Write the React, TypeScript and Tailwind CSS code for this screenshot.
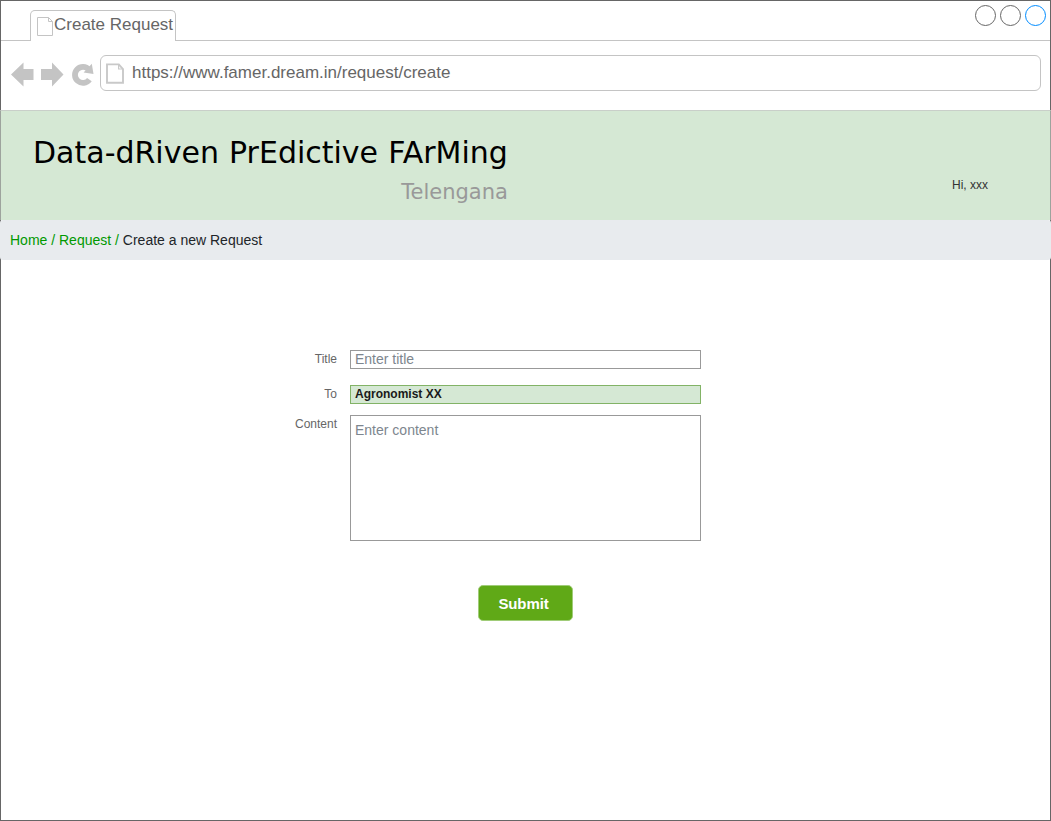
import React from "react";

function TabPageIcon() {
  return (
    <svg viewBox="0 0 17 20" className="mt-[5px] h-5 w-[17px] shrink-0" fill="none" stroke="#c4c4c4">
      <path d="M1.5 1.5H12.5L16.5 5.5V19.5H1.5Z" />
      <path d="M12.5 1.5V5.5H16.5" />
    </svg>
  );
}

function UrlPageIcon() {
  return (
    <svg viewBox="0 0 18 21" className="mt-[7px] h-[21px] w-[18px] shrink-0" fill="none" stroke="#c9c9c9" strokeWidth={1.9}>
      <path d="M1 1.4H12.8L17 6V19.8H1Z" />
      <path d="M12.6 1.4V6H17" strokeWidth={1.2} />
    </svg>
  );
}

function TabStrip() {
  return (
    <div className="flex h-10 shrink-0 items-end text-[17px] text-[#666666]">
      <div className="h-px w-[29px] bg-[#c4c4c4]" />
      <div className="flex h-[31px] w-[146px] rounded-t-[5px] border border-b-0 border-[#c4c4c4] pl-[5px]">
        <TabPageIcon />
        <span className="ml-px mt-px leading-[26px] whitespace-nowrap">Create Request</span>
      </div>
      <div className="flex h-full flex-1 justify-end gap-1 border-b border-[#c4c4c4] pr-1 pt-1">
        <div className="size-[21px] rounded-full border border-[#666666]" />
        <div className="size-[21px] rounded-full border border-[#666666]" />
        <div className="size-[21px] rounded-full border border-[#008cff]" />
      </div>
    </div>
  );
}

function AddressBar() {
  return (
    <div className="flex h-[69px] shrink-0 pl-[10px] pr-[9px] pt-[14px]">
      <svg viewBox="0 0 84 26" className="mt-[6px] h-[26px] w-[84px] shrink-0" fill="#c4c4c4">
        <path d="M0 13.5L12.5 1.5V8H22.5V19H12.5V25.5Z" />
        <path d="M52.5 13.5L41 1.5V8H30V19H41V25.5Z" />
        <path
          d="M78.4 18.6A8 8 0 1 1 78 8.6"
          fill="none"
          stroke="#c4c4c4"
          strokeWidth="5.8"
        />
        <path d="M80.8 2.8L82.5 13L72.6 11.4Z" />
      </svg>
      <div className="ml-[5px] flex h-9 flex-1 rounded-[6px] border border-[#c4c4c4] pl-[5px]">
        <UrlPageIcon />
        <span className="ml-[8px] text-[17px] leading-[33px] text-[#666666]">
          https://www.famer.dream.in/request/create
        </span>
      </div>
    </div>
  );
}

function Header() {
  return (
    <header className="-mx-px flex h-[110px] shrink-0 justify-between border-x border-x-[#9da39d] border-t border-t-[#c9cfc9] bg-[#d5e8d4] pl-8 pr-[62px]">
      <div className="flex flex-col items-end font-['DejaVu_Sans',sans-serif]">
        <h1 className="mt-[23px] text-[30px] leading-[38px] whitespace-nowrap text-black [word-spacing:0.6px]">
          Data-dRiven PrEdictive FArMing
        </h1>
        <p className="mt-[5px] text-[21px] leading-[30px] text-[#999999]">Telengana</p>
      </div>
      <span className="mt-[66px] text-[12px] leading-4 text-[#333333]">Hi, xxx</span>
    </header>
  );
}

function Breadcrumb() {
  return (
    <nav className="-mx-px h-10 shrink-0 rounded-[3px] bg-[#e8ebee] pl-[10px] text-[14px] leading-10 text-[#212529]">
      <span className="text-[#009900]">Home / Request / </span>
      <span>Create a new Request</span>
    </nav>
  );
}

function RequestForm() {
  return (
    <form className="flex flex-col pt-[90px] text-[12px] text-[#666666]">
      <div className="flex">
        <label className="w-[336px] text-right leading-[18px]">Title</label>
        <div className="ml-[13px] h-[19px] w-[351px] border border-[#999999] pl-1 text-[14px] leading-[17px] text-[#7d868e]">
          Enter title
        </div>
      </div>
      <div className="mt-[16px] flex">
        <label className="w-[336px] text-right leading-[18px]">To</label>
        <div className="ml-[13px] h-[19px] w-[351px] border border-[#82b366] bg-[#d5e8d4] pl-1 font-bold leading-[17px] text-[#1a1a1a]">
          Agronomist XX
        </div>
      </div>
      <div className="mt-[11px] flex">
        <label className="w-[336px] text-right leading-[18px]">Content</label>
        <div className="ml-[13px] h-[126px] w-[351px] border border-[#999999] pl-1 pt-[5px] text-[14px] leading-[18px] text-[#7d868e]">
          Enter content
        </div>
      </div>
      <button
        type="button"
        className="ml-[477px] mt-[44px] h-9 w-[95px] rounded-[5px] border border-[#a0cc78] bg-[#60a917] pr-[4px] text-[15px] font-bold leading-[35px] tracking-[-0.1px] text-white"
      >
        Submit
      </button>
    </form>
  );
}

export default function App() {
  return (
    <div className="flex h-[821px] w-[1051px] flex-col border border-[#666666] bg-white font-['Liberation_Sans',Arial,sans-serif]">
      <TabStrip />
      <AddressBar />
      <Header />
      <Breadcrumb />
      <RequestForm />
    </div>
  );
}
